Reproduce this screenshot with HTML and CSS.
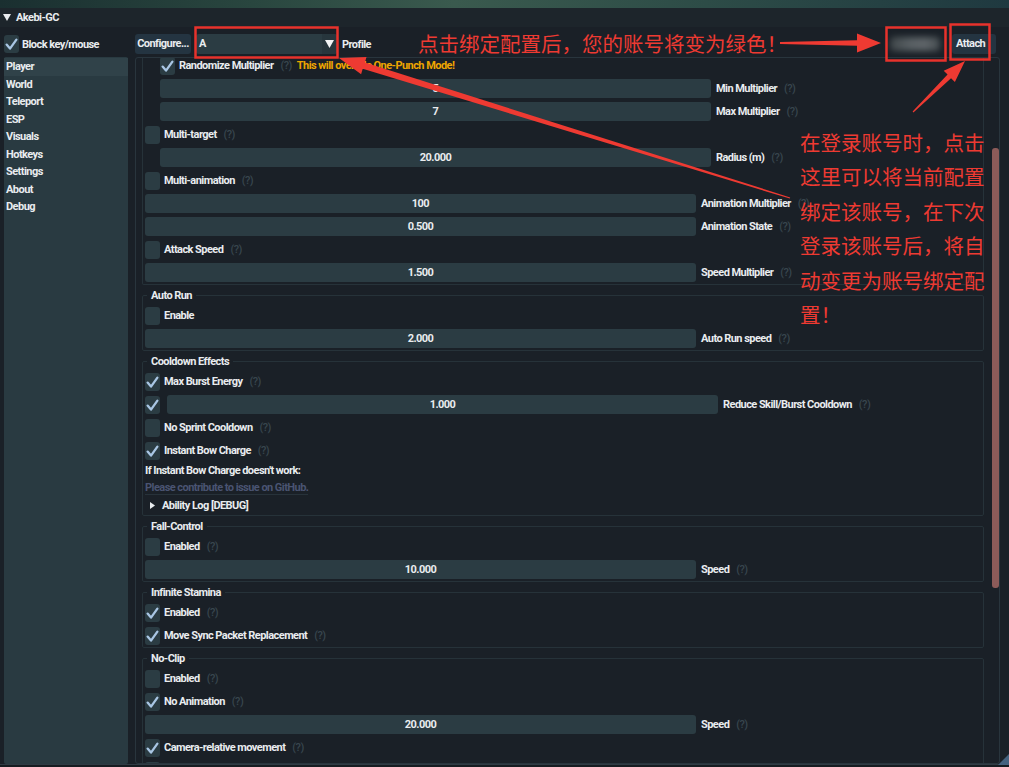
FILE: index.html
```html
<!DOCTYPE html>
<html lang="zh">
<head>
<meta charset="utf-8">
<title>Akebi-GC</title>
<link rel="stylesheet" href="styles.css">
</head>
<body>
<div class="desk"></div>
<div class="win">
  <div class="title">
    <svg class="ttri" viewBox="0 0 8 7" width="8" height="7"><polygon points="0,0 8,0 4,7" fill="#e8ebee"/></svg>
    <span>Akebi-GC</span>
  </div>
  <div class="wbody">
    <div class="lcol">
      <div class="line">
        <span class="cb on"><svg viewBox="0 0 15 18" width="15" height="18"><path d="M2.6 9.6 6 13.6 12.4 4.6" fill="none" stroke="#a9c6e4" stroke-width="2.3" stroke-linecap="round" stroke-linejoin="round"/></svg></span>
        <span>Block key/mouse</span>
      </div>
      <div class="list">
        <div class="item sel">Player</div>
        <div class="item">World</div>
        <div class="item">Teleport</div>
        <div class="item">ESP</div>
        <div class="item">Visuals</div>
        <div class="item">Hotkeys</div>
        <div class="item">Settings</div>
        <div class="item">About</div>
        <div class="item">Debug</div>
      </div>
    </div>
    <div class="rcol">
      <div class="toolbar">
        <span class="btn cfg">Configure...</span>
        <span class="combo"><span class="cv">A</span><span class="carrow"><svg viewBox="0 0 9 8" width="9" height="8"><polygon points="0,0 9,0 4.5,8" fill="#f2f4f6"/></svg></span></span>
        <span class="plabel">Profile</span>
        <span class="spacer"></span>
        <span class="blurbox"><span class="blurin"></span></span>
        <span class="btn attach">Attach</span>
      </div>
      <div class="child">
        <div class="scroll">
          <div class="grp cut">
            <div class="rows">
              <div class="r ind"><span class="cb on"><svg viewBox="0 0 15 18" width="15" height="18"><path d="M2.6 9.6 6 13.6 12.4 4.6" fill="none" stroke="#a9c6e4" stroke-width="2.3" stroke-linecap="round" stroke-linejoin="round"/></svg></span><span class="lb">Randomize Multiplier</span><span class="q">(?)</span><span class="warn">This will override One-Punch Mode!</span></div>
              <div class="r ind"><span class="sl">5</span><span class="sll">Min Multiplier</span><span class="q">(?)</span></div>
              <div class="r ind"><span class="sl">7</span><span class="sll">Max Multiplier</span><span class="q">(?)</span></div>
              <div class="r"><span class="cb"></span><span class="lb">Multi-target</span><span class="q">(?)</span></div>
              <div class="r ind"><span class="sl">20.000</span><span class="sll">Radius (m)</span><span class="q">(?)</span></div>
              <div class="r"><span class="cb"></span><span class="lb">Multi-animation</span><span class="q">(?)</span></div>
              <div class="r"><span class="sl">100</span><span class="sll">Animation Multiplier</span><span class="q">(?)</span></div>
              <div class="r"><span class="sl">0.500</span><span class="sll">Animation State</span><span class="q">(?)</span></div>
              <div class="r"><span class="cb"></span><span class="lb">Attack Speed</span><span class="q">(?)</span></div>
              <div class="r"><span class="sl">1.500</span><span class="sll">Speed Multiplier</span><span class="q">(?)</span></div>
            </div>
          </div>
          <fieldset class="grp">
            <legend>Auto Run</legend>
            <div class="rows">
              <div class="r"><span class="cb"></span><span class="lb">Enable</span></div>
              <div class="r"><span class="sl">2.000</span><span class="sll">Auto Run speed</span><span class="q">(?)</span></div>
            </div>
          </fieldset>
          <fieldset class="grp">
            <legend>Cooldown Effects</legend>
            <div class="rows">
              <div class="r"><span class="cb on"><svg viewBox="0 0 15 18" width="15" height="18"><path d="M2.6 9.6 6 13.6 12.4 4.6" fill="none" stroke="#a9c6e4" stroke-width="2.3" stroke-linecap="round" stroke-linejoin="round"/></svg></span><span class="lb">Max Burst Energy</span><span class="q">(?)</span></div>
              <div class="r"><span class="cb on"><svg viewBox="0 0 15 18" width="15" height="18"><path d="M2.6 9.6 6 13.6 12.4 4.6" fill="none" stroke="#a9c6e4" stroke-width="2.3" stroke-linecap="round" stroke-linejoin="round"/></svg></span><span class="sl after">1.000</span><span class="sll">Reduce Skill/Burst Cooldown</span><span class="q">(?)</span></div>
              <div class="r"><span class="cb"></span><span class="lb">No Sprint Cooldown</span><span class="q">(?)</span></div>
              <div class="r"><span class="cb on"><svg viewBox="0 0 15 18" width="15" height="18"><path d="M2.6 9.6 6 13.6 12.4 4.6" fill="none" stroke="#a9c6e4" stroke-width="2.3" stroke-linecap="round" stroke-linejoin="round"/></svg></span><span class="lb">Instant Bow Charge</span><span class="q">(?)</span></div>
              <div class="tl">If Instant Bow Charge doesn't work:</div>
              <div class="tl"><span class="link">Please contribute to issue on GitHub.</span></div>
              <div class="node"><svg viewBox="0 0 5 7" width="5" height="7"><polygon points="0,0 5,3.5 0,7" fill="#e8ebee"/></svg><span>Ability Log [DEBUG]</span></div>
            </div>
          </fieldset>
          <fieldset class="grp">
            <legend>Fall-Control</legend>
            <div class="rows">
              <div class="r"><span class="cb"></span><span class="lb">Enabled</span><span class="q">(?)</span></div>
              <div class="r"><span class="sl">10.000</span><span class="sll">Speed</span><span class="q">(?)</span></div>
            </div>
          </fieldset>
          <fieldset class="grp">
            <legend>Infinite Stamina</legend>
            <div class="rows">
              <div class="r"><span class="cb on"><svg viewBox="0 0 15 18" width="15" height="18"><path d="M2.6 9.6 6 13.6 12.4 4.6" fill="none" stroke="#a9c6e4" stroke-width="2.3" stroke-linecap="round" stroke-linejoin="round"/></svg></span><span class="lb">Enabled</span><span class="q">(?)</span></div>
              <div class="r"><span class="cb on"><svg viewBox="0 0 15 18" width="15" height="18"><path d="M2.6 9.6 6 13.6 12.4 4.6" fill="none" stroke="#a9c6e4" stroke-width="2.3" stroke-linecap="round" stroke-linejoin="round"/></svg></span><span class="lb">Move Sync Packet Replacement</span><span class="q">(?)</span></div>
            </div>
          </fieldset>
          <fieldset class="grp">
            <legend>No-Clip</legend>
            <div class="rows">
              <div class="r"><span class="cb"></span><span class="lb">Enabled</span><span class="q">(?)</span></div>
              <div class="r"><span class="cb on"><svg viewBox="0 0 15 18" width="15" height="18"><path d="M2.6 9.6 6 13.6 12.4 4.6" fill="none" stroke="#a9c6e4" stroke-width="2.3" stroke-linecap="round" stroke-linejoin="round"/></svg></span><span class="lb">No Animation</span><span class="q">(?)</span></div>
              <div class="r"><span class="sl">20.000</span><span class="sll">Speed</span><span class="q">(?)</span></div>
              <div class="r"><span class="cb on"><svg viewBox="0 0 15 18" width="15" height="18"><path d="M2.6 9.6 6 13.6 12.4 4.6" fill="none" stroke="#a9c6e4" stroke-width="2.3" stroke-linecap="round" stroke-linejoin="round"/></svg></span><span class="lb">Camera-relative movement</span><span class="q">(?)</span></div>
              <div class="r"><span class="cb"></span></div>
            </div>
          </fieldset>
        </div>
        <div class="sbar"><div class="thumb"></div></div>
      </div>
    </div>
  </div>
  <div class="grip"></div>
</div>

<svg class="overlay" viewBox="0 0 1009 767" width="1009" height="767">
  <g fill="none" stroke="#e8322c" stroke-width="2.5">
    <rect x="195.5" y="27.5" width="142" height="30"/>
    <rect x="886.5" y="27.5" width="59" height="33"/>
    <rect x="950.5" y="24.5" width="39" height="35"/>
  </g>
  <g fill="#ee3a32">
    <polygon points="881,43 857,33.5 857,40.2 780,42 780,44 857,45.8 857,52.5"/>
    <polygon points="339,58 366.5,57.1 364.9,62.6 790.2,197.4 789.8,198.6 362.7,68.8 361.1,74.3"/>
    <polygon points="965,61 954.9,82.1 951.05,78.2 913.4,112.4 912.6,111.6 947.55,74.6 943.7,70.7"/>
  </g>
</svg>
<div class="note n1">点击绑定配置后，您的账号将变为绿色！</div>
<div class="note n2">在登录账号时，点击<br>这里可以将当前配置<br>绑定该账号，在下次<br>登录该账号后，将自<br>动变更为账号绑定配<br>置！</div>
</body>
</html>
```

FILE: styles.css
```css
* { box-sizing: border-box; margin: 0; padding: 0; }
html, body { width: 1009px; height: 767px; overflow: hidden; background: #161c21; }
body {
  position: relative;
  font-family: Roboto, "Liberation Sans", sans-serif;
  font-weight: 700;
  font-size: 11px;
  letter-spacing: -0.55px;
  color: #e9ecef;
}

.desk {
  height: 8px;
  background: linear-gradient(90deg, #1a2f30 0%, #29463f 25%, #3a5a4e 45%, #2d4c47 70%, #1f3940 100%);
}

.win {
  position: relative;
  height: 757px;
  background: #1a2027;
  display: flex;
  flex-direction: column;
  border-bottom: 1px solid #303b44;
}

.title {
  height: 19px;
  background: #1d252b;
  display: flex;
  align-items: center;
  gap: 5px;
  padding-left: 3px;
}
.ttri { display: block; }

.wbody {
  flex: 1;
  min-height: 0;
  display: flex;
  gap: 7px;
  padding: 7px 9px 0 4px;
}

.lcol { width: 124px; display: flex; flex-direction: column; gap: 3px; }
.line { height: 20px; display: flex; align-items: center; gap: 3px; }

.list {
  flex: 1;
  background: #293a41;
  border-radius: 2px;
  padding-top: 1px;
}
.item { height: 17.5px; line-height: 17.5px; padding-left: 2px; }
.item.sel { background: #304249; }

.rcol { flex: 1; min-width: 0; display: flex; flex-direction: column; gap: 3px; }

.toolbar { height: 20px; display: flex; align-items: center; }
.btn {
  height: 20px;
  line-height: 20px;
  background: #243441;
  border-radius: 3px;
}
.cfg { width: 56px; text-align: center; margin-right: 5px; }
.combo {
  width: 141px;
  height: 20px;
  display: flex;
  background: #2b3c43;
  border-radius: 3px;
  overflow: hidden;
}
.cv { flex: 1; line-height: 20px; padding-left: 3px; }
.carrow {
  width: 15px;
  display: flex;
  align-items: center;
  justify-content: center;
  background: #27363d;
}
.plabel { margin-left: 5px; }
.spacer { flex: 1; }
.blurbox { width: 58px; height: 20px; margin-right: 8px; display: flex; align-items: center; justify-content: center; }
.blurin {
  width: 50px;
  height: 14px;
  background: linear-gradient(90deg, #3f4649, #596064 40%, #5f6569 70%, #454c50);
  filter: blur(3px);
  border-radius: 4px;
}
.attach { width: 44px; padding-left: 4px; margin-right: 4px; }

.child {
  flex: 1;
  min-height: 0;
  display: flex;
  border: 1px solid #29353d;
  border-radius: 3px;
  padding-left: 6px;
  overflow: hidden;
}
.scroll { flex: 1; min-width: 0; display: flex; flex-direction: column; overflow: hidden; }
.sbar { width: 7px; margin-left: 8px; padding-top: 90px; }
.thumb { height: 440px; background: #8c5b59; border-radius: 3px; }

.grp {
  border: 1px solid #263239;
  border-radius: 2px;
  padding: 2px 2px 2px 2px;
  margin-top: 2px;
  min-width: 0;
}
.grp.cut { border-top: none; margin-top: -2px; padding-top: 0; border-radius: 0 0 2px 2px; }
.grp legend {
  margin-left: 2px;
  padding: 0 4px;
  height: 17px;
  line-height: 17px;
}

.rows { display: flex; flex-direction: column; gap: 4px; }
.r { height: 19px; display: flex; align-items: center; white-space: nowrap; }
.r.ind { padding-left: 15px; }

.cb {
  width: 15px;
  height: 18px;
  flex: none;
  background: #2b3c43;
  border-radius: 3px;
  display: block;
}
.cb svg { display: block; }
.lb { margin-left: 4px; }
.q { margin-left: 7px; color: #38464e; font-weight: 500; }
.warn { margin-left: 5px; color: #eea600; }

.sl {
  width: 551px;
  height: 19px;
  line-height: 19px;
  flex: none;
  background: #2b3c43;
  border-radius: 3px;
  text-align: center;
}
.sl.after { margin-left: 7px; }
.sll { margin-left: 5px; }

.tl { height: 13px; line-height: 13px; white-space: nowrap; }
.link { color: #4a5472; border-bottom: 1px solid #27323a; }
.node { height: 15px; display: flex; align-items: center; gap: 7px; padding-left: 5px; }
.node svg { display: block; }

.grip {
  position: absolute;
  right: 0;
  bottom: -1px;
  width: 0;
  height: 0;
  border-left: 11px solid transparent;
  border-bottom: 11px solid #45627f;
}

.overlay { position: absolute; left: 0; top: 0; pointer-events: none; }

.note {
  position: absolute;
  font-family: "Noto Sans CJK SC", sans-serif;
  font-weight: 400;
  font-size: 20.5px;
  letter-spacing: 0;
  color: #ee3a32;
  white-space: nowrap;
}
.n1 { left: 418px; top: 28px; line-height: 30px; }
.n2 { left: 800px; top: 125px; line-height: 34.4px; }
```
